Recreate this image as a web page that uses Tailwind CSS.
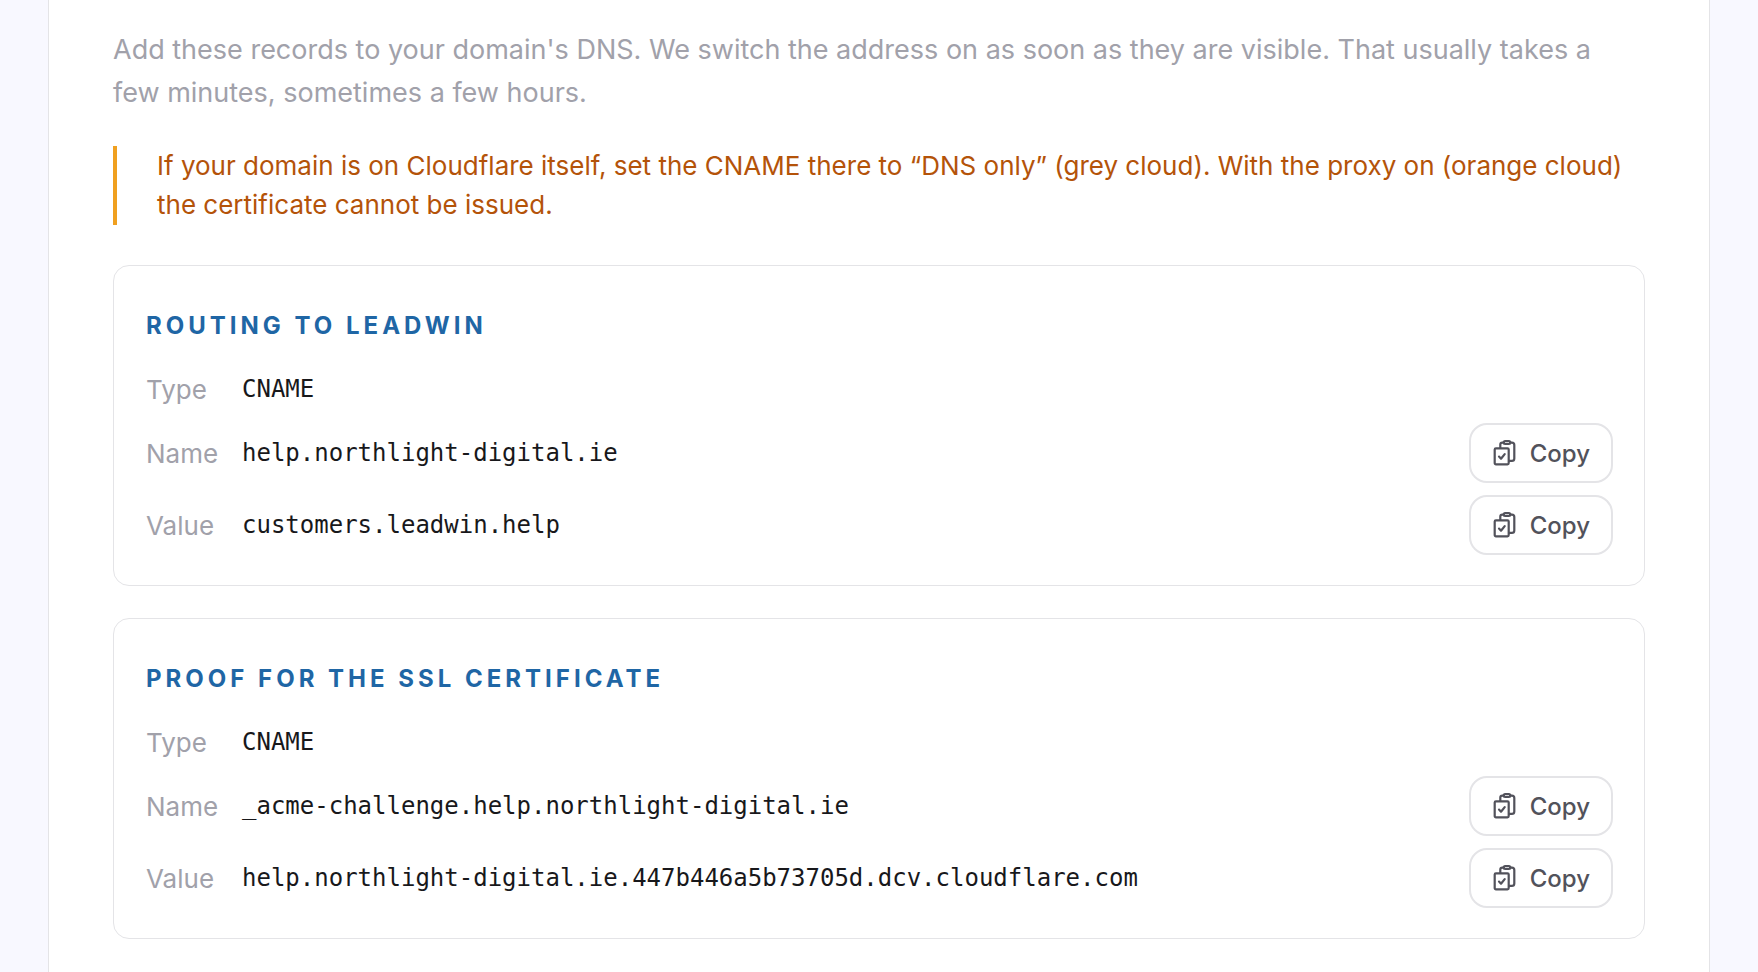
<!DOCTYPE html>
<html lang="en">
  <head>
    <meta charset="utf-8" />
    <meta name="viewport" content="width=device-width, initial-scale=1.0" />
    <title>DNS records</title>
    <script src="https://cdn.jsdelivr.net/npm/@tailwindcss/browser@4"></script>
  </head>
  <body class="bg-[#f8f8ff] font-['Inter',sans-serif]">
    <!-- copy icon, shared by all copy buttons -->
    <svg class="hidden">
      <symbol id="icon-copy" viewBox="-1 0 24 26">
        <g
          fill="none"
          stroke="currentColor"
          stroke-width="2.2"
          stroke-linecap="round"
          stroke-linejoin="round"
        >
          <rect x="1.7" y="8.3" width="14" height="16" rx="1.2" />
          <path
            d="M7.3 8V4.6a2 2 0 0 1 2-2h1.4M17.3 2.6h1.6a2.4 2.4 0 0 1 2.4 2.4v13.4a2.4 2.4 0 0 1-2.4 2.4h-2.8"
          />
          <rect x="10.7" y="1.1" width="6.6" height="2.9" rx="1.4" />
          <path d="M6 16.6l2 2.1 3.7-4.6" />
        </g>
      </symbol>
    </svg>

    <main
      class="mx-12 min-h-screen border-x border-[#e4e4e7] bg-white px-16 pt-7 pb-8"
    >
      <p class="text-[27px] leading-[43px] text-[#a1a1aa]">
        Add these records to your domain's DNS. We switch the address on as soon
        as they are visible. That usually takes a few minutes, sometimes a few
        hours.
      </p>

      <p
        class="mt-8 border-l-4 border-[#f0a020] pb-px pl-10 text-[26px] leading-[39px] text-[#b45309]"
      >
        If your domain is on Cloudflare itself, set the CNAME there to “DNS
        only” (grey cloud). With the proxy on (orange cloud) the certificate
        cannot be issued.
      </p>

      <!-- routing record -->
      <section
        class="mt-10 rounded-2xl border border-[#e4e4e7] pt-10 pr-[31px] pb-[30px] pl-8"
      >
        <h2
          class="text-[24px] leading-[40px] font-bold tracking-[4px] text-[#1f66a5] uppercase"
        >
          Routing to Leadwin
        </h2>
        <dl class="mt-6 flex flex-col gap-3 text-[26px] leading-[39px]">
          <div class="flex items-center pb-0.5">
            <dt class="w-24 text-[#a1a1aa]">Type</dt>
            <dd class="font-['DejaVu_Sans_Mono',monospace] text-[24px] text-[#18181b]">
              CNAME
            </dd>
          </div>
          <div class="flex items-center">
            <dt class="w-24 text-[#a1a1aa]">Name</dt>
            <dd class="grow font-['DejaVu_Sans_Mono',monospace] text-[24px] text-[#18181b]">
              help.northlight-digital.ie
            </dd>
            <dd>
              <button
                type="button"
                aria-label="Copy name"
                class="flex h-[60px] items-center gap-3.5 rounded-[18px] border-2 border-[#e4e4e7] px-[21px] text-[24px] font-medium text-[#52525b] hover:bg-zinc-50"
              >
                <svg class="h-[26px] w-6"><use href="#icon-copy" /></svg>
                Copy
              </button>
            </dd>
          </div>
          <div class="flex items-center">
            <dt class="w-24 text-[#a1a1aa]">Value</dt>
            <dd class="grow font-['DejaVu_Sans_Mono',monospace] text-[24px] text-[#18181b]">
              customers.leadwin.help
            </dd>
            <dd>
              <button
                type="button"
                aria-label="Copy value"
                class="flex h-[60px] items-center gap-3.5 rounded-[18px] border-2 border-[#e4e4e7] px-[21px] text-[24px] font-medium text-[#52525b] hover:bg-zinc-50"
              >
                <svg class="h-[26px] w-6"><use href="#icon-copy" /></svg>
                Copy
              </button>
            </dd>
          </div>
        </dl>
      </section>

      <!-- certificate record -->
      <section
        class="mt-8 rounded-2xl border border-[#e4e4e7] pt-10 pr-[31px] pb-[30px] pl-8"
      >
        <h2
          class="text-[24px] leading-[40px] font-bold tracking-[4px] text-[#1f66a5] uppercase"
        >
          Proof for the SSL certificate
        </h2>
        <dl class="mt-6 flex flex-col gap-3 text-[26px] leading-[39px]">
          <div class="flex items-center pb-0.5">
            <dt class="w-24 text-[#a1a1aa]">Type</dt>
            <dd class="font-['DejaVu_Sans_Mono',monospace] text-[24px] text-[#18181b]">
              CNAME
            </dd>
          </div>
          <div class="flex items-center">
            <dt class="w-24 text-[#a1a1aa]">Name</dt>
            <dd class="grow font-['DejaVu_Sans_Mono',monospace] text-[24px] text-[#18181b]">
              _acme-challenge.help.northlight-digital.ie
            </dd>
            <dd>
              <button
                type="button"
                aria-label="Copy name"
                class="flex h-[60px] items-center gap-3.5 rounded-[18px] border-2 border-[#e4e4e7] px-[21px] text-[24px] font-medium text-[#52525b] hover:bg-zinc-50"
              >
                <svg class="h-[26px] w-6"><use href="#icon-copy" /></svg>
                Copy
              </button>
            </dd>
          </div>
          <div class="flex items-center">
            <dt class="w-24 text-[#a1a1aa]">Value</dt>
            <dd class="grow font-['DejaVu_Sans_Mono',monospace] text-[24px] text-[#18181b]">
              help.northlight-digital.ie.447b446a5b73705d.dcv.cloudflare.com
            </dd>
            <dd>
              <button
                type="button"
                aria-label="Copy value"
                class="flex h-[60px] items-center gap-3.5 rounded-[18px] border-2 border-[#e4e4e7] px-[21px] text-[24px] font-medium text-[#52525b] hover:bg-zinc-50"
              >
                <svg class="h-[26px] w-6"><use href="#icon-copy" /></svg>
                Copy
              </button>
            </dd>
          </div>
        </dl>
      </section>
    </main>
  </body>
</html>
